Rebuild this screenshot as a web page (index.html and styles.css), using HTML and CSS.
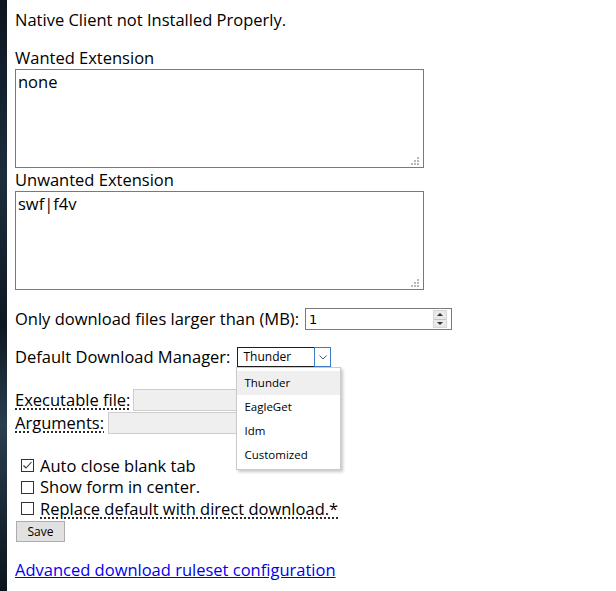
FILE: index.html
```html
<!DOCTYPE html>
<html lang="en">
<head>
    <meta charset="UTF-8">
    <meta name="viewport" content="width=device-width, initial-scale=1.0">
    <title>Options</title>
    <link rel="stylesheet" href="styles.css">
</head>
<body>

<div class="page">
    <p class="status">Native Client not Installed Properly.</p>

    <label class="field-title" for="wanted">Wanted Extension</label>
    <div class="area-wrap"><textarea id="wanted">none</textarea></div>

    <label class="field-title gap-1" for="unwanted">Unwanted Extension</label>
    <div class="area-wrap"><textarea id="unwanted">swf|f4v</textarea></div>

    <div class="row size-row">
        <label for="minSize">Only download files larger than (MB):</label>
        <div class="number-box">
            <input id="minSize" type="text" value="1">
            <span class="spinner"><span class="up"></span><span class="down"></span></span>
        </div>
    </div>

    <div class="row manager-row">
        <label>Default Download Manager:</label>
        <div class="select-box">
            <span class="select-value">Thunder</span>
            <span class="select-arrow">
                <svg width="8" height="5" viewBox="0 0 8 5"><path d="M0.5 0.5L4 4L7.5 0.5" fill="none" stroke="#4d5d6c" stroke-width="1"/></svg>
            </span>
            <ul class="select-menu">
                <li class="active">Thunder</li>
                <li>EagleGet</li>
                <li>Idm</li>
                <li>Customized</li>
            </ul>
        </div>
    </div>

    <div class="row exe-row">
        <span class="hint">Executable file:</span>
        <input class="path-input" type="text" disabled>
    </div>
    <div class="row args-row">
        <span class="hint">Arguments:</span>
        <input class="path-input" type="text" disabled>
    </div>

    <div class="options">
        <label class="check">
            <span class="box"><svg width="11" height="11" viewBox="0 0 11 11"><path d="M1.5 5.5L4 8L9.5 2" fill="none" stroke="#333" stroke-width="1.1"/></svg></span>
            Auto close blank tab
        </label>
        <label class="check"><span class="box"></span>Show form in center.</label>
        <label class="check"><span class="box tight"></span><span class="hint lead">Replace default with direct download.*</span></label>
    </div>

    <button class="save">Save</button>

    <a class="advanced" href="#">Advanced download ruleset configuration</a>
</div>

</body>
</html>
```

FILE: styles.css
```css
html {
    background: linear-gradient(180deg, #0b1520 0%, #1c2e3e 30%, #0d1822 55%, #2a3e50 72%, #0a141c 100%);
}
body {
    margin: 0 0 0 7px;
    min-height: 100vh;
    background: #fff;
    font-family: "Open Sans", "Noto Sans", sans-serif;
    font-size: 16.5px;
    line-height: 22px;
    color: #000;
}
.page {
    display: flex;
    flex-direction: column;
    align-items: flex-start;
    padding: 9px 8px 0;
}
.status {
    margin: 0 0 16px;
}
.field-title {
    display: block;
}
.gap-1 {
    margin-top: 1px;
}

/* textareas with the little grip */
.area-wrap {
    position: relative;
    width: 409px;
    height: 99px;
}
.area-wrap textarea {
    display: block;
    width: 100%;
    height: 100%;
    box-sizing: border-box;
    border: 1px solid #7a7a7a;
    padding: 1px 2px;
    font: 16.5px/22px "Open Sans", "Noto Sans", sans-serif;
    resize: none;
    outline: none;
}
.area-wrap::after {
    content: "";
    position: absolute;
    right: 5px;
    bottom: 3px;
    width: 2px;
    height: 2px;
    background: #b8b8b8;
    box-shadow: -3px 0 #b8b8b8, -6px 0 #b8b8b8, -3px -3px #b8b8b8, 0 -3px #b8b8b8, 0 -6px #b8b8b8;
}

.row {
    display: flex;
    align-items: center;
    height: 22px;
}
.size-row {
    margin-top: 18px;
}
.number-box {
    display: flex;
    width: 147px;
    height: 22px;
    box-sizing: border-box;
    margin-left: 6px;
    border: 1px solid #7a7a7a;
}
.number-box input {
    flex: 1;
    min-width: 0;
    border: none;
    padding: 0 3px;
    font: 13px "DejaVu Sans", sans-serif;
    outline: none;
}
.spinner {
    display: flex;
    flex-direction: column;
    width: 14px;
    margin: 1px 4px 1px 0;
    background: #e9e9e9;
    border: 1px solid #d6d6d6;
    box-sizing: border-box;
}
.spinner span {
    flex: 1;
    display: flex;
    align-items: center;
    justify-content: center;
}
.spinner .up {
    border-bottom: 1px solid #c4c4c4;
}
.spinner .up::before,
.spinner .down::before {
    content: "";
    border-left: 3px solid transparent;
    border-right: 3px solid transparent;
}
.spinner .up::before {
    border-bottom: 3px solid #333;
}
.spinner .down::before {
    border-top: 3px solid #333;
}

/* opened select */
.manager-row {
    margin-top: 16px;
}
.select-box {
    position: relative;
    z-index: 2;
    display: flex;
    width: 94px;
    height: 20px;
    box-sizing: border-box;
    margin-left: 7px;
    border: 1px solid #1e1e1e;
    font-size: 12px;
    line-height: 18px;
}
.select-value {
    flex: 1;
    padding-left: 5px;
}
.select-arrow {
    display: flex;
    align-items: center;
    justify-content: center;
    width: 17px;
    height: 20px;
    box-sizing: border-box;
    margin: -1px -1px -1px 0;
    border: 1px solid #3b7dc4;
}
.select-menu {
    position: absolute;
    top: 19px;
    left: -2px;
    width: 105px;
    box-sizing: border-box;
    margin: 0;
    padding: 3px 0 2px;
    list-style: none;
    background: #fff;
    border: 1px solid #cbcbcb;
    box-shadow: 2px 2px 3px rgba(0, 0, 0, 0.22);
    font-size: 11.5px;
}
.select-menu li {
    height: 24px;
    line-height: 24px;
    padding-left: 7px;
}
.select-menu li.active {
    background: #efefef;
}

.exe-row {
    margin-top: 21px;
    gap: 3px;
}
.args-row {
    margin-top: 1px;
    gap: 4px;
}
.hint {
    text-decoration: underline dotted;
    text-underline-offset: 3px;
}
.path-input {
    width: 160px;
    height: 22px;
    box-sizing: border-box;
    border: 1px solid #cdcdcd;
    background: #efefef;
}

.options {
    margin-top: 21px;
}
.check {
    display: flex;
    align-items: center;
    height: 21.5px;
}
.box {
    display: flex;
    align-items: center;
    justify-content: center;
    width: 13px;
    height: 13px;
    box-sizing: border-box;
    margin: 0 6px;
    border: 1px solid #333;
    background: #fff;
}
.box.tight {
    margin-right: 1px;
}
.lead {
    padding-left: 5px;
}

.save {
    margin: 1.5px 0 0 1px;
    width: 49px;
    height: 21px;
    padding: 0;
    background: #e1e1e1;
    border: 1px solid #adadad;
    font: 12px "Open Sans", "Noto Sans", sans-serif;
    color: #000;
}
.advanced {
    margin-top: 17px;
    color: #0000ee;
}
```
